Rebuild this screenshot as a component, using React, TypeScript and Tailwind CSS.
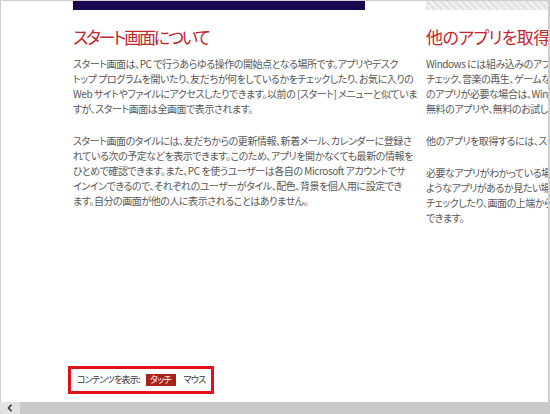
const leftP1 = [
  "スタート画面は、PC で行うあらゆる操作の開始点となる場所です。アプリやデスク",
  "トップ プログラムを開いたり、友だちが何をしているかをチェックしたり、お気に入りの",
  "Web サイトやファイルにアクセスしたりできます。以前の [スタート] メニューと似ていま",
  "すが、スタート画面は全画面で表示されます。",
];

const leftP2 = [
  "スタート画面のタイルには、友だちからの更新情報、新着メール、カレンダーに登録さ",
  "れている次の予定などを表示できます。このため、アプリを開かなくても最新の情報を",
  "ひとめで確認できます。また、PC を使うユーザーは各自の Microsoft アカウントでサ",
  "インインできるので、それぞれのユーザーがタイル、配色、背景を個人用に設定でき",
  "ます。自分の画面が他の人に表示されることはありません。",
];

const rightP1 = [
  "Windows には組み込みのアプリが多数用意されていて、メールの",
  "チェック、音楽の再生、ゲームなどを楽しむことができます。さらに他",
  "のアプリが必要な場合は、Windows ストアで探すことができます。",
  "無料のアプリや、無料のお試し版のアプリも提供されています。",
];

const rightP2 = ["他のアプリを取得するには、スタート画面の [ストア] をタップします。"];

const rightP3 = [
  "必要なアプリがわかっている場合は、名前で検索できます。どの",
  "ようなアプリがあるか見たい場合は、おすすめのアプリやカテゴリを",
  "チェックしたり、画面の上端から下端に向かってスワイプしたりすることが",
  "できます。",
];

function Lines({ lines }: { lines: string[] }) {
  return (
    <div className="text-[10px] leading-[15px] text-[#585858] tracking-[-0.45px] whitespace-nowrap">
      {lines.map((l, i) => (
        <div key={i}>{l}</div>
      ))}
    </div>
  );
}

function Column({
  title,
  banner,
  paragraphs,
  width,
  titleClass,
}: {
  title: string;
  banner: "dark" | "light";
  paragraphs: string[][];
  width: string;
  titleClass: string;
}) {
  return (
    <div className={`${width} shrink-0 flex flex-col`}>
      {banner === "dark" ? (
        <div className="h-[9px] bg-[#1b0650]" />
      ) : (
        <div className="h-[9px] bg-[#e4e4e4] bg-[repeating-linear-gradient(45deg,#e4e4e4_0px,#e4e4e4_3px,#f2f2f2_3px,#f2f2f2_5px)]" />
      )}
      <h2 className={`mt-[16px] text-[17px] leading-[22px] text-[#c3262d] whitespace-nowrap ${titleClass}`}>
        {title}
      </h2>
      <div className="mt-[8px] flex flex-col gap-[17px]">
        {paragraphs.map((p, i) => (
          <Lines key={i} lines={p} />
        ))}
      </div>
    </div>
  );
}

export default function App() {
  return (
    <div
      className="w-[550px] h-[414px] bg-white flex flex-col overflow-hidden [font-feature-settings:'palt']"
      style={{ fontFamily: '"Noto Sans CJK JP", "Liberation Sans", sans-serif' }}
    >
      {/* content area */}
      <div className="flex-1 min-h-0 flex flex-col border-t border-l border-r-2 border-[#cfcfcf] overflow-hidden">
        <div className="flex-1 flex pl-[72px] gap-[61px] overflow-hidden">
          <Column
            title="スタート画面について"
            banner="dark"
            width="w-[292px]"
            titleClass="tracking-[-2.2px]"
            paragraphs={[leftP1, leftP2]}
          />
          <Column
            title="他のアプリを取得するには"
            banner="light"
            width="w-[320px]"
            titleClass="tracking-[-0.6px]"
            paragraphs={[rightP1, rightP2, rightP3]}
          />
        </div>

        {/* content mode switch */}
        <div className="pl-[67px] pb-[8px]">
          <div className="w-[146px] flex items-center h-[28px] border-[3px] border-[#e3101b] pl-[6px] text-[9px] text-[#333]">
            <span className="tracking-[-0.8px]">コンテンツを表示:</span>
            <span className="ml-[6px] h-[12px] w-[30px] flex items-center justify-center bg-[#a8211b] text-white tracking-[-0.6px]">
              タッチ
            </span>
            <span className="ml-[8px] tracking-[-0.8px]">マウス</span>
          </div>
        </div>
      </div>

      {/* horizontal scrollbar */}
      <div className="h-[12px] flex bg-[#cacaca]">
        <div className="w-[20px] flex items-center justify-center bg-[#e2e2e2]">
          <svg width="6" height="8" viewBox="0 0 6 8">
            <path d="M4.5 0.8 L1.5 4 L4.5 7.2" fill="none" stroke="#333" strokeWidth="1.6" />
          </svg>
        </div>
        <div className="flex-1 bg-[#c9c9c9]" />
      </div>
    </div>
  );
}
